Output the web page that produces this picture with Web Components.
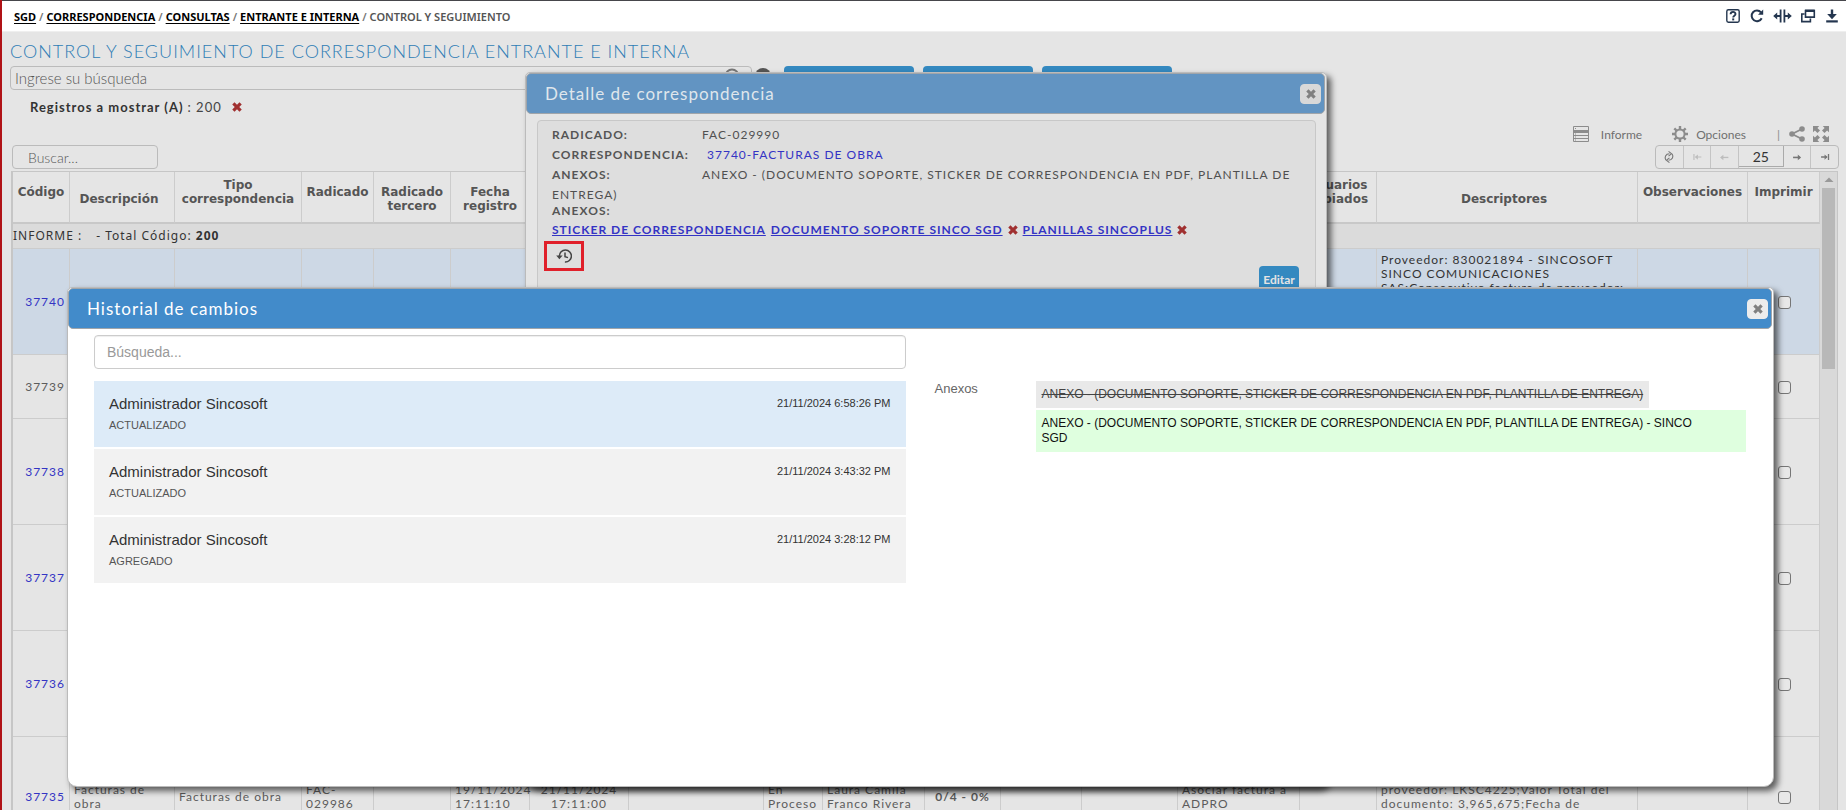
<!DOCTYPE html>
<html lang="es">
<head>
<meta charset="utf-8">
<title>Control y seguimiento</title>
<style>
  html, body { margin: 0; height: 100%; }
  body { overflow: hidden; background: #e5e5e5; color: #555; font-family: Lato, "Open Sans", sans-serif; font-size: 14px; }
</style>
</head>
<body>
<sgd-app></sgd-app>
<script>
const define = (name, html, setup) => {
  const tpl = document.createElement('template');
  tpl.innerHTML = html;
  customElements.define(name, class extends HTMLElement {
    connectedCallback() {
      if (this.shadowRoot) return;
      this.attachShadow({ mode: 'open' }).append(tpl.content.cloneNode(true));
      if (setup) setup(this, this.shadowRoot);
    }
  });
};

/* ---------- icons ---------- */
const ICONS = {
  help: '<rect x="1.8" y="1.8" width="12.4" height="12.4" rx="1.6" fill="none" stroke="currentColor" stroke-width="1.4"/><path d="M5.6 6.3c0-3.2 4.9-3.1 4.9-.3 0 1.7-2.3 1.7-2.3 3.4" fill="none" stroke="currentColor" stroke-width="1.9"/><rect x="7.2" y="10.4" width="2" height="2" fill="currentColor"/>',
  reload: '<path d="M12.7 10.2A5.3 5.3 0 1 1 12 4.4" fill="none" stroke="currentColor" stroke-width="2"/><path d="M14.2 1.6v5.2H9z" fill="currentColor"/>',
  split: '<path d="M7.6 1.5v13M11.4 1.5v13" stroke="currentColor" stroke-width="1.8"/><path d="M2 8h5M12 8h5" stroke="currentColor" stroke-width="1.8"/><path d="M.2 8l4-3.6v7.2zM18.8 8l-4-3.6v7.2z" fill="currentColor"/>',
  windows: '<path d="M5.5 2.5h8.8v6.6H5.5z" fill="none" stroke="currentColor" stroke-width="1.6"/><path d="M5 2.8h9.6" stroke="currentColor" stroke-width="2.4"/><path d="M4.6 6H1.8v7.6h8.6v-3" fill="none" stroke="currentColor" stroke-width="1.6"/>',
  download: '<path d="M8 1.5v6" stroke="currentColor" stroke-width="2.4"/><path d="M3.2 6h9.6L8 11.2z" fill="currentColor"/><path d="M2.2 13.4h11.6" stroke="currentColor" stroke-width="2.2"/>',
  report: '<path d="M.5.5h15v15H.5z" fill="none" stroke="currentColor"/><path d="M0 5.5h16" stroke="currentColor" stroke-width="3"/><path d="M0 9.5h16M0 12.5h16" stroke="currentColor"/><path d="M2 2.5h1M2 8h1M2 11h1M2 14h1" stroke="currentColor"/>',
  gear: '<circle cx="8" cy="8" r="4.6" fill="none" stroke="currentColor" stroke-width="2"/><path d="M8 0v3M8 13v3M0 8h3M13 8h3M2.3 2.3l2.2 2.2M11.5 11.5l2.2 2.2M2.3 13.7l2.2-2.2M11.5 4.5l2.2-2.2" stroke="currentColor" stroke-width="2.4"/>',
  share: '<path d="M13 3L3 8l10 5" fill="none" stroke="currentColor" stroke-width="1.8"/><circle cx="13" cy="3" r="2.8" fill="currentColor"/><circle cx="3" cy="8" r="2.8" fill="currentColor"/><circle cx="13" cy="13" r="2.8" fill="currentColor"/>',
  expand: '<path d="M0 0h6.2L4.4 1.9l2.6 2.6L4.5 7 1.9 4.4 0 6.2zM16 0v6.2l-1.9-1.8L11.5 7 9 4.5l2.6-2.6L9.8 0zM0 16V9.8l1.9 1.8L4.5 9 7 11.5l-2.6 2.6L6.2 16zM16 16H9.8l1.8-1.9L9 11.5 11.5 9l2.6 2.6L16 9.8z" fill="currentColor"/>',
  sync: '<path d="M4.4 11.5C2.5 8.5 4 4.3 8.5 4.3M11.6 4.5c1.9 3 .4 7.2-4.1 7.2" fill="none" stroke="currentColor" stroke-width="1.3"/><path d="M7.5 1.5L11 4.3 7.5 7M8.5 9L5 11.7l3.5 2.8" fill="none" stroke="currentColor" stroke-width="1.2"/>',
  first: '<path d="M4.5 4.5v7M6.5 8h6.5" stroke="currentColor" stroke-width="1.3"/><path d="M5.5 8l3.5-3v6z" fill="currentColor"/>',
  prev: '<path d="M5 8.5h8" stroke="currentColor" stroke-width="1.5"/><path d="M3.5 8.5L7.3 5.3v6.4z" fill="currentColor"/>',
  next: '<path d="M3.5 8.5h8" stroke="currentColor" stroke-width="1.8"/><path d="M12.7 8.5L8.9 5.2v6.6z" fill="currentColor"/>',
  last: '<path d="M12 4.5v7M3.5 8h6.5" stroke="currentColor" stroke-width="1.5"/><path d="M11 8L7.5 5v6z" fill="currentColor"/>',
  cross: '<path d="M4 .4L8 4.4l4-4L15.6 4l-4 4 4 4-3.6 3.6-4-4-4 4L.4 12l4-4-4-4z" fill="currentColor"/>',
  history: '<path d="M3.4 8.2a6 6 0 1 1 5.5 5.8" fill="none" stroke="currentColor" stroke-width="1.5"/><path d="M.2 7.6h6.4L3.4 11.2z" fill="currentColor"/><path d="M9 4.5v4.2l3 .9" fill="none" stroke="currentColor" stroke-width="1.5"/>',
  search: '<circle cx="8" cy="8" r="6.5" fill="none" stroke="currentColor" stroke-width="2"/>',
  info: '<circle cx="8" cy="8" r="8" fill="currentColor"/>',
  up: '<path d="M3.5 10L8 5.5l4.5 4.5z" fill="currentColor"/>'
};
define('sgd-icon', `
<style>:host{display:inline-block;width:16px;height:16px;flex:none}svg{display:block;width:100%;height:100%}</style>`,
(el, root) => {
  const n = el.getAttribute('name');
  root.innerHTML += `<svg viewBox="0 0 ${n === 'split' ? 19 : 16} 16" aria-hidden="true">${ICONS[n]}</svg>`;
});

/* ---------- top bar ---------- */
define('sgd-topbar', `
<style>
:host{display:flex;align-items:center;justify-content:space-between;height:30px;border-top:1px solid #46464b;border-bottom:1px solid #efefef;background:#fff;padding:0 6px 0 14px;font:600 11px/34px "Noto Sans",sans-serif}
nav{color:#777;display:flex;gap:3px;padding-top:2px}
a{color:#000;font-weight:700;text-underline-offset:2px}
b{color:#555;font-weight:600}
.tools{display:flex;gap:8px;color:#24364f}
button{border:0;background:none;padding:0;color:inherit;display:flex}
.wide{width:19px}
</style>
<nav aria-label="Ruta"><a href="#">SGD</a><span>/</span><a href="#">CORRESPONDENCIA</a><span>/</span><a href="#">CONSULTAS</a><span>/</span><a href="#">ENTRANTE E INTERNA</a><span>/</span><b>CONTROL Y SEGUIMIENTO</b></nav>
<div class="tools">
<button aria-label="Ayuda"><sgd-icon name="help"></sgd-icon></button>
<button aria-label="Recargar"><sgd-icon name="reload"></sgd-icon></button>
<button aria-label="Dividir"><sgd-icon class="wide" name="split"></sgd-icon></button>
<button aria-label="Ventanas"><sgd-icon name="windows"></sgd-icon></button>
<button aria-label="Descargar"><sgd-icon name="download"></sgd-icon></button>
</div>`);

/* ---------- filters and search ---------- */
define('sgd-filters', `
<style>
:host{display:block;padding:0 10px 0 10px}
h1{margin:0;padding-top:4px;font:300 18px/30px Lato,sans-serif;letter-spacing:1px;color:#2f7db5}
.row{display:flex;align-items:flex-start;height:24px}
.box{display:flex;align-items:flex-start;justify-content:flex-end;width:742px;height:24px;box-sizing:border-box;border:1px solid #bbb;border-radius:4px}
input{flex:1;align-self:stretch;border:0;background:none;outline:0;padding:0 4px;font:300 15px Lato,sans-serif;color:#555}
input::placeholder{color:#555}
.box sgd-icon{margin-right:11px;margin-top:1px;color:#777}
.info{margin:2px 13px 0 3px;color:#555}
.acts{display:flex;gap:9px}
.acts button{width:130px;height:32px;border:0;border-radius:4px;background:#3489c0}
.acts button:nth-child(2){width:110px}
.chip{display:flex;align-items:center;height:20px;margin:7px 0 0 20px;gap:4px;font-size:13px;letter-spacing:1px;color:#444}
.chip b{color:#333}
.chip button{border:0;background:none;padding:0;color:#a03030;display:flex;margin-left:6px}
.chip sgd-icon{width:10px;height:10px}
</style>
<h1>CONTROL Y SEGUIMIENTO DE CORRESPONDENCIA ENTRANTE E INTERNA</h1>
<div class="row"><div class="box"><input aria-label="Ingrese su búsqueda" placeholder="Ingrese su búsqueda"><sgd-icon name="search"></sgd-icon></div><sgd-icon class="info" name="info"></sgd-icon>
<div class="acts"><button aria-label="Consultar"></button><button aria-label="Limpiar"></button><button aria-label="Exportar"></button></div></div>
<div class="chip"><b>Registros a mostrar (A)</b><span>: 200</span><button aria-label="Quitar filtro"><sgd-icon name="cross"></sgd-icon></button></div>`);

/* ---------- grid toolbar ---------- */
define('sgd-toolbar', `
<style>
:host{display:flex;justify-content:space-between;align-items:flex-end;padding:6px 7px 2px 12px;color:#8c8c8c}
input{font:300 14px Lato,sans-serif;box-sizing:border-box}
.find{width:146px;height:24px;border:1px solid #bbb;border-radius:4px;background:none;padding:0 15px}
.find::placeholder{color:#555}
.menu{display:flex;align-items:center;justify-content:flex-end;height:22px;padding-right:10px;font-size:12px}
.menu button{display:flex;align-items:center;gap:8px;border:0;background:none;padding:0;font:inherit;color:#707070}
.menu sgd-icon{color:#8c8c8c}
.menu .rep{gap:12px;margin-right:30px}
.menu .bar{margin:0 9px 0 31px}
.menu .ex{margin-left:8px}
.end{display:flex;justify-content:flex-end}
.pager{display:flex;border:1px solid #bbb;border-radius:4px;height:22px;width:182px}
.pager button{flex:1;display:flex;align-items:center;justify-content:center;border:0;border-right:1px solid #c4c4c4;background:none;padding:0;color:#777}
.pager button:last-child{border-right:0}
.pager button:disabled{color:#bdbdbd}
.pager sgd-icon{width:14px;height:14px}
.pager input{width:45px;height:21px;border:1px solid #aaa;border-width:0 1px 1px 0;background:none;text-align:center;padding:0;font-weight:400;color:#333}
</style>
<input class="find" aria-label="Buscar" placeholder="Buscar...">
<div><div class="menu"><button class="rep"><sgd-icon name="report"></sgd-icon>Informe</button><button><sgd-icon name="gear"></sgd-icon>Opciones</button><span class="bar">|</span><button aria-label="Compartir"><sgd-icon name="share"></sgd-icon></button><button class="ex" aria-label="Pantalla completa"><sgd-icon name="expand"></sgd-icon></button></div>
<div class="end"><div class="pager"><button aria-label="Actualizar"><sgd-icon name="sync"></sgd-icon></button><button disabled aria-label="Primera"><sgd-icon name="first"></sgd-icon></button><button disabled aria-label="Anterior"><sgd-icon name="prev"></sgd-icon></button><input aria-label="Registros por página" value="25"><button aria-label="Siguiente"><sgd-icon name="next"></sgd-icon></button><button aria-label="Última"><sgd-icon name="last"></sgd-icon></button></div></div></div>`);

/* ---------- data table ---------- */
const WIDTHS = [57,105,127,72,77,79,99,135,59,102,76,81,96,122,77,0,110,72];
const HEADS = { 0:['Código','up'], 1:['Descripción','near'], 2:['Tipo<br>correspondencia','up'], 3:['Radicado','up'], 4:['Radicado<br>tercero',''], 5:['Fecha<br>registro',''], 14:['Usuarios<br>copiados','up'], 15:['Descriptores','near'], 16:['Observaciones','up'], 17:['Imprimir','up'] };
const ROWS = [
  { h:106, code:'37740', link:1, sel:1, cells:{ 15:'Proveedor: 830021894 - SINCOSOFT<br>SINCO COMUNICACIONES<br>SAS;Consecutivo factura de proveedor:' } },
  { h:64, code:'37739' }, { h:106, code:'37738', link:1 }, { h:106, code:'37737', link:1 }, { h:106, code:'37736', link:1 },
  { h:120, code:'37735', link:1, cells:{ 1:'Facturas de<br>obra', 2:'Facturas de obra', 3:'FAC-<br>029986', 5:'19/11/2024<br>17:11:10', 6:'<div>21/11/2024<br>17:11:00</div>', 8:'En<br>Proceso', 9:'Laura Camila<br>Franco Rivera', 10:'<div><b>0/4 - 0%</b></div>', 13:'Asociar factura a<br>ADPRO', 15:'proveedor: LKSC4225;Valor Total del<br>documento: 3,965,675;Fecha de' } }
];
define('sgd-grid', `
<style>
:host{display:flex;margin:0 8px 0 11px;border:1px solid #c6c6c6;border-left-width:2px}
table{flex:1;min-width:0;border-collapse:separate;border-spacing:0;table-layout:fixed;width:100%}
th,td{box-sizing:border-box;border-right:1px solid #ccc;border-bottom:1px solid #ccc;padding:0 4px;line-height:14px}
th{height:52px;border-bottom:2px solid #c8c8c8;font:700 12px/14px "DejaVu Sans",sans-serif;color:#555;white-space:nowrap;padding:3px 0 0}
th.up{padding-bottom:14px}
th.near{padding-right:6px}
.group td{height:25px;background:#dbdbdb;color:#333;font:12px/14px "Noto Sans",sans-serif;padding:0;border-right:0}
.group span{margin-left:14px}
td{font-size:12px;letter-spacing:1px;text-align:left;color:#5c5c5c;white-space:nowrap}
td.code{text-align:right}
td.top{vertical-align:top;padding-top:4px;color:#333}
td.pick{text-align:center;padding-left:6px;padding-right:5px}
a{color:#3434c4;text-decoration:none}
td div{text-align:center}
.sel td{background:#cdd8e5}
input{appearance:none;display:inline-block;width:13px;height:13px;margin:0;border:1px solid #767676;border-radius:3px;background:#e8e8e8;vertical-align:middle}
.bar{width:17px;box-sizing:border-box;background:#d9d9d9;display:flex;flex-direction:column;align-items:center}
.bar i{width:13px;height:181px;background:#b8b8b8}
.bar sgd-icon{color:#999}
</style>
<table><colgroup></colgroup><thead><tr></tr></thead><tbody><tr class="group"><td colspan="18">INFORME :<span>- Total Código: <b>200</b></span></td></tr></tbody></table>
<div class="bar"><sgd-icon name="up"></sgd-icon><i></i></div>`,
(el, root) => {
  root.querySelector('colgroup').innerHTML = WIDTHS.map(w => w ? `<col style="width:${w}px">` : '<col>').join('');
  root.querySelector('thead tr').innerHTML = WIDTHS.map((w, i) => HEADS[i] ? `<th class="${HEADS[i][1]}">${HEADS[i][0]}</th>` : '<th></th>').join('');
  root.querySelector('tbody').insertAdjacentHTML('beforeend', ROWS.map(r =>
    `<tr class="${r.sel ? 'sel' : ''}" style="height:${r.h}px">` + WIDTHS.map((w, i) => {
      if (i === 0) return `<td class="code">${r.link ? `<a href="#">${r.code}</a>` : r.code}</td>`;
      if (i === 17) return `<td class="pick"><input type="checkbox" aria-label="Imprimir ${r.code}"></td>`;
      const v = r.cells && r.cells[i] || '';
      return `<td class="${r.sel ? 'top' : ''}">${v}</td>`;
    }).join('') + '</tr>').join(''));
});

/* ---------- dialog frame ---------- */
define('sgd-dialog', `
<style>
:host{display:flex;flex-direction:column;box-sizing:border-box;border:1px solid #bbb;border-radius:5px 5px 10px 10px;background:var(--body,#fff);box-shadow:4px 4px 6px rgba(0,0,0,.6)}
header{display:flex;align-items:center;justify-content:space-between;box-sizing:border-box;height:41px;flex:none;margin-right:1px;border:1px solid #a0a5aa;border-radius:5px;background:var(--head,#428bca);color:var(--title,#fff);padding:0 3px 0 18px}
h2{margin:0;font:400 17px/24px Lato,sans-serif;letter-spacing:1px}
button{display:flex;align-items:center;justify-content:center;box-sizing:border-box;width:21px;height:20px;padding:0;border:1px solid var(--btn,#ececec);border-radius:4px;background:var(--btn,#ececec);color:#808080}
sgd-icon{width:10px;height:10px}
</style>
<header><h2></h2><button aria-label="Cerrar"><sgd-icon name="cross"></sgd-icon></button></header><slot></slot>`,
(el, root) => { root.querySelector('h2').textContent = el.getAttribute('heading'); });

/* ---------- mail detail ---------- */
define('sgd-detail', `
<style>
:host{display:block;flex:1;margin:6px 10px 10px 11px;box-sizing:border-box;border:1px solid #c8c8c8;border-radius:4px;background:#dedede;padding:4px 14px;color:#505050;font:12px/20px Lato,sans-serif;letter-spacing:1px}
p{margin:0}
b{display:inline-block;min-width:150px;color:#555}
.corr{margin-left:5px;color:#3434c4;text-decoration:none}
.tight{line-height:11px}
.files{display:flex;align-items:center;gap:5px;line-height:20px;margin-top:4px}
.files a{color:#3434c4;font-weight:700}
.files button,.hist{border:0;background:none;padding:0;display:flex;color:#a03030}
.files sgd-icon{width:10px;height:10px}
.hist{box-sizing:border-box;width:40px;height:30px;margin:1px 0 0 -8px;border:3px solid #e0202a;color:#444;align-items:center;justify-content:center}
.edit{display:flex;justify-content:flex-end;margin-top:-5px;padding-right:2px}
.edit button{width:40px;height:26px;border:0;border-radius:4px;background:#3489c0;color:#e4e4e4;font:700 12px Lato,sans-serif;padding:0}
</style>
<p><b>RADICADO:</b>FAC-029990</p>
<p><b>CORRESPONDENCIA:</b><a class="corr" href="#">37740-FACTURAS DE OBRA</a></p>
<p><b>ANEXOS:</b>ANEXO - (DOCUMENTO SOPORTE, STICKER DE CORRESPONDENCIA EN PDF, PLANTILLA DE<br>ENTREGA)</p>
<p class="tight"><b>ANEXOS:</b></p>
<div class="files"><a href="#">STICKER DE CORRESPONDENCIA</a><a href="#">DOCUMENTO SOPORTE SINCO SGD</a><button aria-label="Eliminar"><sgd-icon name="cross"></sgd-icon></button><a href="#">PLANILLAS SINCOPLUS</a><button aria-label="Eliminar"><sgd-icon name="cross"></sgd-icon></button></div>
<button class="hist" aria-label="Historial de cambios"><sgd-icon name="history"></sgd-icon></button>
<div class="edit"><button>Editar</button></div>`);

/* ---------- change history ---------- */
define('history-entry', `
<style>
:host{display:flex;justify-content:space-between;box-sizing:border-box;height:66px;padding:13px 15px;background:#f2f2f2;color:#333}
:host([active]){background:#ddebf8}
h3{margin:0;font:400 15px/20px "Liberation Sans",sans-serif}
p{margin:0;font-size:11px;line-height:22px;color:#555}
time{font-size:11px;line-height:18px}
</style>
<div><h3><slot></slot></h3><p></p></div><time></time>`,
(el, root) => {
  root.querySelector('p').textContent = el.getAttribute('action');
  root.querySelector('time').textContent = el.getAttribute('when');
});
define('sgd-history', `
<style>
:host{display:grid;grid-template-columns:1fr 1fr;column-gap:29px;padding:6px 27px 20px 26px;color:#333;font:12px/15px "Liberation Sans",sans-serif}
.list{display:flex;flex-direction:column;gap:2px}
input{box-sizing:border-box;height:34px;width:100%;border:1px solid #ccc;border-radius:4px;padding:0 12px;margin-bottom:10px;font:14px "Liberation Sans",sans-serif;box-shadow:inset 0 1px 1px rgba(0,0,0,.07)}
input::placeholder{color:#999}
dl{margin:46px 0 0;display:grid;grid-template-columns:101px 1fr}
dt{color:#666;line-height:15px;font-size:13px}
dd{margin:0;display:flex;flex-direction:column;align-items:flex-start;gap:2px}
del,ins{padding:6px}
del{background:#e9e9e9;color:#444}
ins{align-self:stretch;background:#dfffdf;color:#111;text-decoration:none}
</style>
<div class="list"><input aria-label="Búsqueda" placeholder="Búsqueda...">
<history-entry active action="ACTUALIZADO" when="21/11/2024 6:58:26 PM">Administrador Sincosoft</history-entry>
<history-entry action="ACTUALIZADO" when="21/11/2024 3:43:32 PM">Administrador Sincosoft</history-entry>
<history-entry action="AGREGADO" when="21/11/2024 3:28:12 PM">Administrador Sincosoft</history-entry></div>
<dl><dt>Anexos</dt><dd><del>ANEXO - (DOCUMENTO SOPORTE, STICKER DE CORRESPONDENCIA EN PDF, PLANTILLA DE ENTREGA)</del><ins>ANEXO - (DOCUMENTO SOPORTE, STICKER DE CORRESPONDENCIA EN PDF, PLANTILLA DE ENTREGA) - SINCO<br>SGD</ins></dd></dl>`);

/* ---------- application shell ---------- */
define('sgd-app', `
<style>
:host{display:block;position:relative;height:100vh;overflow:hidden;box-sizing:border-box;border-left:2px solid #b01217}
main{display:block}
sgd-filters,sgd-topbar,sgd-toolbar{margin-left:-2px}
sgd-grid{margin-left:9px}
.layer{position:absolute;top:72px;left:4px;right:0;display:flex;justify-content:center}
.layer sgd-dialog{width:802px;height:715px;--head:#6294c2;--title:#dfe6ec;--btn:#d8d8d8;--body:#e5e5e5}
.front{position:absolute;top:287px;left:65px;right:72px;height:500px}
</style>
<sgd-topbar></sgd-topbar>
<main><sgd-filters></sgd-filters><sgd-toolbar></sgd-toolbar><sgd-grid></sgd-grid></main>
<div class="layer"><sgd-dialog role="dialog" heading="Detalle de correspondencia"><sgd-detail></sgd-detail></sgd-dialog></div>
<sgd-dialog class="front" role="dialog" heading="Historial de cambios"><sgd-history></sgd-history></sgd-dialog>`);
</script>
</body>
</html>
